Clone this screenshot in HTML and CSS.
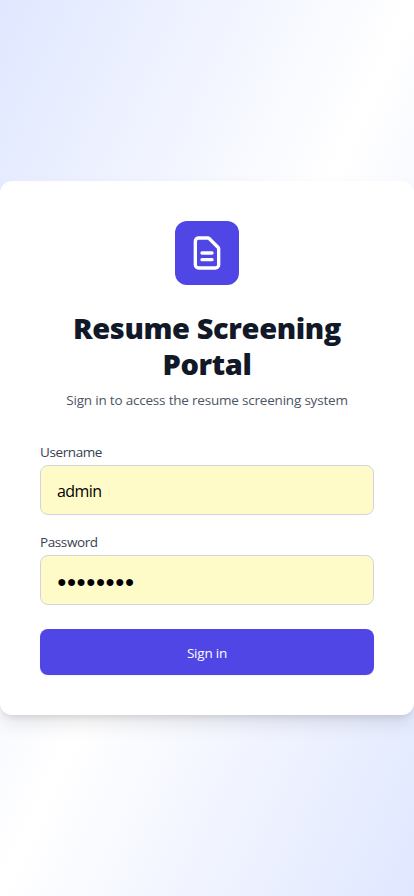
FILE: index.html
```html
<!DOCTYPE html>
<html lang="en">
<head>
<meta charset="utf-8">
<meta name="viewport" content="width=device-width, initial-scale=1">
<title>Resume Screening Portal</title>
<link rel="stylesheet" href="styles.css">
</head>
<body>
<main class="page">
<section class="card">
<header class="intro">
<div class="logo"><svg viewBox="0 0 24 24"><path d="M9 12h6m-6 4h6m2 5H7a2 2 0 01-2-2V5a2 2 0 012-2h5.586a1 1 0 01.707.293l5.414 5.414a1 1 0 01.293.707V19a2 2 0 01-2 2z"/></svg></div>
<h1>Resume Screening Portal</h1>
<p>Sign in to access the resume screening system</p>
</header>
<form>
<div class="field"><label for="u">Username</label><input id="u" type="text" value="admin"></div>
<div class="field"><label for="p">Password</label><input id="p" class="masked" type="text" value="●●●●●●●●"></div>
<button type="button">Sign in</button>
</form>
</section>
</main>
</body>
</html>
```
FILE: styles.css
```css
* { box-sizing: border-box; }
body { margin: 0; font-family: "Open Sans", "Noto Sans", sans-serif; }
.page { min-height: 896px; display: flex; align-items: center; background: linear-gradient(to bottom right, #e0e7ff, #fff, #e0e7ff); }
.card { width: 100%; padding: 40px; border-radius: 12px; background: #fff; box-shadow: 0 10px 20px -2px rgba(0,0,0,.1), 0 4px 6px -2px rgba(0,0,0,.1); }
.intro { display: flex; flex-direction: column; align-items: center; text-align: center; }
.logo { display: grid; place-items: center; width: 64px; height: 64px; border-radius: 12px; background: #4f46e5; }
.logo svg { width: 40px; height: 40px; fill: none; stroke: #fff; stroke-width: 2; stroke-linecap: round; stroke-linejoin: round; }
h1 { margin: 25px 0 0; font-size: 29px; line-height: 36px; font-weight: 800; color: #111827; letter-spacing: -.38px; }
p { margin: 8px 0 0; font-size: 13.5px; line-height: 20px; color: #4b5563; white-space: nowrap; letter-spacing: -.2px; }
form { margin-top: 32px; }
.field { margin-bottom: 16px; }
label { display: block; margin-bottom: 3px; font-size: 13.5px; line-height: 20px; color: #374151; letter-spacing: -.4px; }
.field + .field label { padding-top: 1px; }
input { display: block; width: 100%; height: 50px; padding: 2px 16px 0; border: 1px solid #d1d5db; border-radius: 8px; background: #fffbc8; color: #000; font: 16px "Open Sans", sans-serif; letter-spacing: -.6px; }
.masked { padding-top: 4px; font-family: "Liberation Sans", sans-serif; letter-spacing: 0; }
button { display: block; width: 100%; height: 46px; margin-top: 24px; padding: 1px 0 0; border: 0; border-radius: 8px; background: #4f46e5; color: #fff; font: 13.5px "Open Sans", sans-serif; letter-spacing: -.2px; box-shadow: 0 1px 2px rgba(0,0,0,.05); }
```
